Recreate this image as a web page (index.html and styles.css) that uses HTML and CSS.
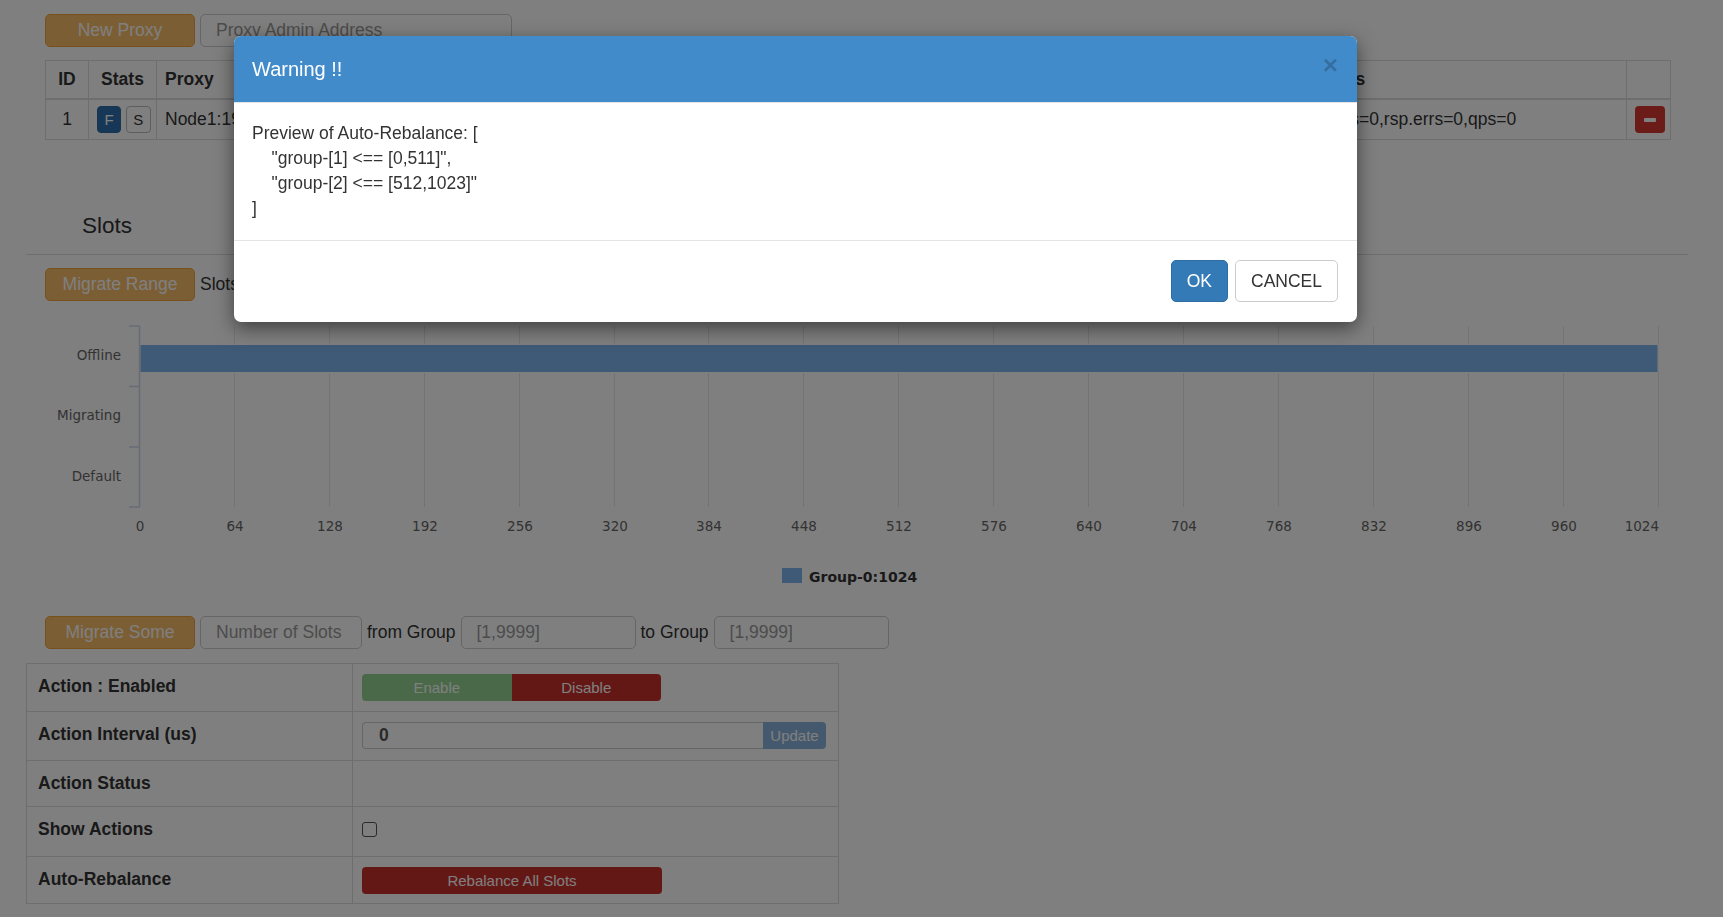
FILE: index.html
```html
<!DOCTYPE html>
<html>
<head>
<meta charset="utf-8">
<title>Codis Dashboard</title>
<link rel="stylesheet" href="styles.css">
</head>
<body>
<div class="page">
  <section class="proxy-section">
    <div class="toolbar">
      <button class="btn btn-warning btn-wide">New Proxy</button>
      <input class="form-input admin-input" type="text" placeholder="Proxy Admin Address">
    </div>
    <table class="proxy-table">
      <colgroup>
        <col class="w-id"><col class="w-stats"><col class="w-proxy"><col class="w-admin"><col class="w-dc"><col class="w-sess"><col class="w-cmd"><col class="w-act">
      </colgroup>
      <thead>
        <tr><th class="center">ID</th><th class="center">Stats</th><th>Proxy</th><th>Admin</th><th>Data Center</th><th>Sessions</th><th>Commands</th><th></th></tr>
      </thead>
      <tbody>
        <tr>
          <td class="center">1</td>
          <td class="center"><span class="btn-xs btn-primary">F</span> <span class="btn-xs btn-default">S</span></td>
          <td>Node1:19000</td>
          <td>Node1:11080</td>
          <td></td>
          <td>total=0,alive=0</td>
          <td>total=0,fails=0,rsp.errs=0,qps=0</td>
          <td class="center"><span class="btn-remove"><span class="minus"></span></span></td>
        </tr>
      </tbody>
    </table>
  </section>

  <section class="slots-section">
    <h4 class="slots-title">Slots</h4>
    <hr class="rule">
    <div class="toolbar">
      <button class="btn btn-warning btn-wide">Migrate Range</button>
      <span class="label-text">Slots</span>
      <input class="form-input small-input" type="text" placeholder="[0,1023]">
      <span class="label-text">-</span>
      <input class="form-input small-input" type="text" placeholder="[0,1023]">
      <span class="label-text">to Group</span>
      <input class="form-input small-input" type="text" placeholder="[1,9999]">
    </div>

    <svg class="chart" width="1723" height="315" viewBox="0 0 1723 315" xmlns="http://www.w3.org/2000/svg">
      <g stroke="#e6e6e6" stroke-width="1">
        <line x1="234.5" y1="25" x2="234.5" y2="206"/>
        <line x1="329.5" y1="25" x2="329.5" y2="206"/>
        <line x1="424.5" y1="25" x2="424.5" y2="206"/>
        <line x1="519.5" y1="25" x2="519.5" y2="206"/>
        <line x1="614.5" y1="25" x2="614.5" y2="206"/>
        <line x1="708.5" y1="25" x2="708.5" y2="206"/>
        <line x1="803.5" y1="25" x2="803.5" y2="206"/>
        <line x1="898.5" y1="25" x2="898.5" y2="206"/>
        <line x1="993.5" y1="25" x2="993.5" y2="206"/>
        <line x1="1088.5" y1="25" x2="1088.5" y2="206"/>
        <line x1="1183.5" y1="25" x2="1183.5" y2="206"/>
        <line x1="1278.5" y1="25" x2="1278.5" y2="206"/>
        <line x1="1373.5" y1="25" x2="1373.5" y2="206"/>
        <line x1="1468.5" y1="25" x2="1468.5" y2="206"/>
        <line x1="1563.5" y1="25" x2="1563.5" y2="206"/>
        <line x1="1658.5" y1="25" x2="1658.5" y2="206"/>
      </g>
      <rect x="140" y="43.5" width="1518" height="28" fill="#7cb5ec" stroke="#ffffff" stroke-width="1"/>
      <g stroke="#ccd6eb" stroke-width="1.5">
        <line x1="139.5" y1="25" x2="139.5" y2="206"/>
        <line x1="129" y1="25" x2="139.5" y2="25"/>
        <line x1="129" y1="85.5" x2="139.5" y2="85.5"/>
        <line x1="129" y1="146" x2="139.5" y2="146"/>
        <line x1="129" y1="206" x2="139.5" y2="206"/>
      </g>
      <g class="axis-label" text-anchor="end">
        <text x="121" y="59">Offline</text>
        <text x="121" y="119">Migrating</text>
        <text x="121" y="180">Default</text>
      </g>
      <g class="axis-label" text-anchor="middle">
        <text x="140" y="230">0</text>
        <text x="235" y="230">64</text>
        <text x="330" y="230">128</text>
        <text x="425" y="230">192</text>
        <text x="520" y="230">256</text>
        <text x="615" y="230">320</text>
        <text x="709" y="230">384</text>
        <text x="804" y="230">448</text>
        <text x="899" y="230">512</text>
        <text x="994" y="230">576</text>
        <text x="1089" y="230">640</text>
        <text x="1184" y="230">704</text>
        <text x="1279" y="230">768</text>
        <text x="1374" y="230">832</text>
        <text x="1469" y="230">896</text>
        <text x="1564" y="230">960</text>
        <text x="1659" y="230" text-anchor="end">1024</text>
      </g>
      <rect x="782" y="267" width="20" height="15" fill="#7cb5ec"/>
      <text class="legend-label" x="809" y="281">Group-0:1024</text>
    </svg>

    <div class="toolbar migrate-some">
      <button class="btn btn-warning btn-wide">Migrate Some</button>
      <input class="form-input num-input" type="text" placeholder="Number of Slots">
      <span class="label-text">from Group</span>
      <input class="form-input group-input" type="text" placeholder="[1,9999]">
      <span class="label-text">to Group</span>
      <input class="form-input group-input" type="text" placeholder="[1,9999]">
    </div>

    <table class="action-table">
      <colgroup><col class="w-label"><col class="w-value"></colgroup>
      <tbody>
        <tr class="row-a">
          <td class="label-cell">Action : Enabled</td>
          <td>
            <div class="btn-group">
              <span class="seg seg-enable">Enable</span><span class="seg seg-disable">Disable</span>
            </div>
          </td>
        </tr>
        <tr class="row-b">
          <td class="label-cell">Action Interval (us)</td>
          <td>
            <div class="input-group">
              <input class="interval-input" type="text" value="0"><span class="update-btn">Update</span>
            </div>
          </td>
        </tr>
        <tr class="row-c">
          <td class="label-cell">Action Status</td>
          <td></td>
        </tr>
        <tr class="row-d">
          <td class="label-cell">Show Actions</td>
          <td><span class="checkbox"></span></td>
        </tr>
        <tr class="row-e">
          <td class="label-cell">Auto-Rebalance</td>
          <td><span class="rebalance-btn">Rebalance All Slots</span></td>
        </tr>
      </tbody>
    </table>
  </section>
</div>

<div class="backdrop"></div>

<div class="modal">
  <div class="modal-header">
    <span class="close">×</span>
    <h4 class="modal-title">Warning !!</h4>
  </div>
  <div class="modal-body">Preview of Auto-Rebalance: [
    "group-[1] &lt;== [0,511]",
    "group-[2] &lt;== [512,1023]"
]</div>
  <div class="modal-footer">
    <button class="btn-modal btn-ok">OK</button>
    <button class="btn-modal btn-cancel">CANCEL</button>
  </div>
</div>
</body>
</html>
```

FILE: styles.css
```css
html, body {
  margin: 0;
  padding: 0;
  height: 100%;
  overflow: hidden;
}

body {
  font-family: "Liberation Sans", Arial, sans-serif;
  font-size: 17.5px;
  line-height: 25px;
  color: #333;
  background: #fff;
}

.page {
  position: relative;
}

/* ---------- proxy section ---------- */
.proxy-section {
  padding: 14px 53px 0 45px;
}

.toolbar {
  display: flex;
  align-items: center;
  gap: 5px;
  height: 33px;
}

.btn {
  box-sizing: border-box;
  height: 33px;
  padding: 0 15px;
  border: 1px solid #eea236;
  border-radius: 5px;
  font: inherit;
  line-height: 25px;
  cursor: pointer;
}

.btn-warning {
  background: #f8bc6a;
  color: #fff;
}

.btn-wide {
  width: 150px;
}

.form-input {
  box-sizing: border-box;
  height: 33px;
  padding: 0 15px;
  border: 1px solid #ccc;
  border-radius: 5px;
  font: inherit;
  color: #555;
  background: #fff;
  outline: none;
}

.form-input::placeholder {
  color: #999;
}

.admin-input {
  width: 312px;
}

.proxy-table {
  margin-top: 13px;
  width: 1625px;
  table-layout: fixed;
  border-collapse: collapse;
}

.w-id { width: 43px; }
.w-stats { width: 68px; }
.w-proxy { width: 300px; }
.w-admin { width: 300px; }
.w-dc { width: 250px; }
.w-sess { width: 255px; }
.w-cmd { width: 365px; }
.w-act { width: 44px; }

.proxy-table th,
.proxy-table td {
  border: 1px solid #ddd;
  padding: 0 8px;
  text-align: left;
  white-space: nowrap;
  overflow: hidden;
}

.proxy-table th {
  height: 37px;
  border-bottom: 2px solid #ddd;
  font-weight: bold;
}

.proxy-table td {
  height: 39px;
}

.proxy-table .center {
  text-align: center;
}

.btn-xs {
  display: inline-block;
  box-sizing: border-box;
  height: 27px;
  line-height: 25px;
  padding: 0 6px;
  font-size: 15px;
  border: 1px solid transparent;
  border-radius: 4px;
  vertical-align: middle;
}

.btn-primary {
  width: 24px;
  background: #2f6fae;
  border-color: #2e6da4;
  color: #fff;
}

.btn-default {
  width: 25px;
  background: #fff;
  border-color: #bbb;
  color: #333;
}

.btn-remove {
  display: inline-flex;
  align-items: center;
  justify-content: center;
  width: 30px;
  height: 27px;
  background: #d63631;
  border-radius: 4px;
  vertical-align: middle;
}

.minus {
  display: block;
  width: 12px;
  height: 4px;
  background: #fff;
  border-radius: 1px;
}

/* ---------- slots section ---------- */
.slots-section {
  padding: 0 35px 0 26px;
}

.slots-title {
  margin: 73px 0 0 56px;
  font-size: 22.5px;
  font-weight: normal;
  line-height: 25px;
  color: #333;
}

.rule {
  margin: 16px 0 13px 0;
  border: 0;
  border-top: 1px solid #dcdcdc;
  height: 0;
}

.slots-section > .toolbar {
  padding-left: 19px;
}

.label-text {
  white-space: nowrap;
}

.small-input {
  width: 162px;
}

.chart {
  display: block;
  margin-left: -26px;
}

.axis-label {
  font-family: "DejaVu Sans", sans-serif;
  font-size: 13.5px;
  fill: #666;
}

.legend-label {
  font-family: "DejaVu Sans", sans-serif;
  font-size: 14px;
  font-weight: bold;
  fill: #333;
}

.num-input {
  width: 162px;
}

.group-input {
  width: 175px;
}

/* ---------- action table ---------- */
.action-table {
  margin-top: 14px;
  width: 812px;
  table-layout: fixed;
  border-collapse: collapse;
}

.w-label { width: 326px; }
.w-value { width: 486px; }

.action-table td {
  border: 1px solid #ddd;
  padding: 10px 10px 0 9px;
  vertical-align: top;
  box-sizing: border-box;
}

.action-table .label-cell {
  font-weight: bold;
  padding-left: 11px;
}

.row-a td { height: 48px; }
.row-b td { height: 49px; }
.row-c td { height: 46px; }
.row-d td { height: 50px; }
.row-e td { height: 47px; }

.btn-group {
  display: flex;
  width: 299px;
}

.seg {
  flex: 1;
  height: 27px;
  line-height: 27px;
  text-align: center;
  font-size: 15px;
  color: #fff;
}

.seg-enable {
  background: #93d293;
  border-radius: 4px 0 0 4px;
}

.seg-disable {
  background: #c9302c;
  border-radius: 0 4px 4px 0;
}

.input-group {
  display: flex;
  width: 464px;
  height: 27px;
}

.interval-input {
  box-sizing: border-box;
  width: 401px;
  height: 27px;
  padding: 0 16px;
  border: 1px solid #ccc;
  border-right: 0;
  border-radius: 4px 0 0 4px;
  font-family: inherit;
  font-size: 17.5px;
  font-weight: bold;
  color: #555;
  background: #fff;
  outline: none;
}

.update-btn {
  width: 63px;
  height: 27px;
  line-height: 27px;
  text-align: center;
  font-size: 15px;
  color: #fff;
  background: #8ab2dc;
  border-radius: 0 4px 4px 0;
}

.checkbox {
  display: block;
  box-sizing: border-box;
  width: 15px;
  height: 15px;
  margin-top: 5px;
  border: 1px solid #555;
  border-radius: 3px;
  background: #fff;
}

.rebalance-btn {
  display: block;
  width: 300px;
  height: 27px;
  line-height: 27px;
  text-align: center;
  font-size: 15px;
  color: #fff;
  background: #c9302c;
  border-radius: 4px;
}

/* ---------- modal ---------- */
.backdrop {
  position: fixed;
  inset: 0;
  background: rgba(0, 0, 0, 0.5);
}

.modal {
  position: absolute;
  left: 234px;
  top: 36px;
  width: 1123px;
  background: #fff;
  border-radius: 7px;
  box-shadow: 0 6px 19px rgba(0, 0, 0, 0.5);
  overflow: hidden;
}

.modal-header {
  background: #428bca;
  padding: 19px 19px 18px 18px;
  border-bottom: 1px solid #e5e5e5;
  color: #fff;
}

.modal-title {
  margin: 0;
  font-size: 20px;
  font-weight: normal;
  line-height: 29px;
}

.close {
  float: right;
  margin-top: -4px;
  font-size: 26px;
  font-weight: bold;
  line-height: 29px;
  color: #000;
  opacity: 0.2;
}

.modal-body {
  padding: 18px 19px 19px 18px;
  white-space: pre;
  color: #333;
}

.modal-footer {
  display: flex;
  justify-content: flex-end;
  gap: 7px;
  padding: 19px 19px 20px 19px;
  border-top: 1px solid #e5e5e5;
}

.btn-modal {
  box-sizing: border-box;
  height: 42px;
  padding: 0 15px;
  border: 1px solid;
  border-radius: 5px;
  font: inherit;
  line-height: 25px;
}

.btn-ok {
  background: #337ab7;
  border-color: #2e6da4;
  color: #fff;
}

.btn-cancel {
  background: #fff;
  border-color: #ccc;
  color: #333;
}
```
